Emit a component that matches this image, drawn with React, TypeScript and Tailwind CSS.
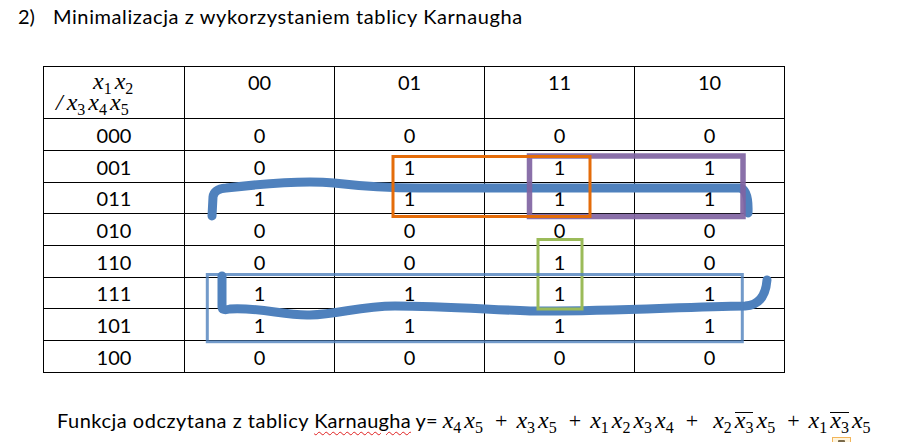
type Row = { label: string; v: string[]; h: string };

const rows: Row[] = [
  { label: "000", v: ["0", "0", "0", "0"], h: "h-[32px]" },
  { label: "001", v: ["0", "1", "1", "1"], h: "h-[32px]" },
  { label: "011", v: ["1", "1", "1", "1"], h: "h-[31px]" },
  { label: "010", v: ["0", "0", "0", "0"], h: "h-[32px]" },
  { label: "110", v: ["0", "0", "1", "0"], h: "h-[32px]" },
  { label: "111", v: ["1", "1", "1", "1"], h: "h-[31px]" },
  { label: "101", v: ["1", "1", "1", "1"], h: "h-[32px]" },
  { label: "100", v: ["0", "0", "0", "0"], h: "h-[32px]" },
];

// one variable with an upright subscript, optional negation bar
function X({ i, bar }: { i: string; bar?: boolean }) {
  return (
    <span className="relative inline-block pr-[3px]">
      <span className="italic text-[24px]">x</span>
      <span className="relative top-[5px] text-[16px] not-italic">{i}</span>
      {bar && <span className="absolute left-0 right-[3px] top-[4px] h-px bg-black" />}
    </span>
  );
}

function Plus() {
  return <span className="mx-[9px] text-[22px] not-italic">+</span>;
}

export default function App() {
  return (
    <div className="relative w-[912px] h-[442px] overflow-hidden bg-white text-black font-['Lato','Open_Sans',sans-serif]">
      <div className="h-[66px] pt-[4px] pl-[18px] text-[20px] leading-[24px]">
        <span>2)</span>
        <span className="ml-[18px] tracking-[0.6px]">Minimalizacja z wykorzystaniem tablicy Karnaugha</span>
      </div>

      <table className="ml-[43px] w-[742px] table-fixed border-collapse text-[20px] leading-[24px]">
        <colgroup>
          <col className="w-[141px]" />
          <col className="w-[150px]" />
          <col className="w-[150px]" />
          <col className="w-[150px]" />
          <col className="w-[150px]" />
        </colgroup>
        <tbody>
          <tr>
            <td className="h-[52px] border border-black p-0 align-top">
              <div className="flex flex-col font-['Liberation_Serif',serif] leading-[19px]">
                <span className="pl-[49px] pt-[5px]">
                  <X i="1" />
                  <X i="2" />
                </span>
                <span className="pl-[12px]">
                  <span className="mr-[4px] text-[24px] italic">/</span>
                  <X i="3" />
                  <X i="4" />
                  <X i="5" />
                </span>
              </div>
            </td>
            {["00", "01", "11", "10"].map((c) => (
              <td key={c} className="border border-black p-0 pt-[3px] text-center align-top">
                {c}
              </td>
            ))}
          </tr>
          {rows.map((r) => (
            <tr key={r.label}>
              <td className={`${r.h} border border-black p-0 text-center align-middle`}>{r.label}</td>
              {r.v.map((v, k) => (
                <td key={k} className="border border-black p-0 text-center align-middle">
                  {v}
                </td>
              ))}
            </tr>
          ))}
        </tbody>
      </table>

      <div className="mt-[35px] pl-[57px] text-[20px] leading-[24px] whitespace-nowrap">
        <span className="tracking-[0.5px]">Funkcja odczytana z tablicy </span>
        <span className="tracking-[0.3px] underline decoration-wavy decoration-[#e02020] decoration-1 underline-offset-[3px]">
          Karnaugha
        </span>
        <span> y= </span>
        <span className="font-['Liberation_Serif',serif]">
          <X i="4" />
          <X i="5" />
          <Plus />
          <X i="3" />
          <X i="5" />
          <Plus />
          <X i="1" />
          <X i="2" />
          <X i="3" />
          <X i="4" />
          <Plus />
          <span className="ml-[6px]" />
          <X i="2" />
          <X i="3" bar />
          <X i="5" />
          <Plus />
          <X i="1" />
          <X i="3" bar />
          <X i="5" />
        </span>
      </div>

      {/* paste options marker, cut off by the bottom edge */}
      <div className="absolute left-[832px] top-[437px] h-[10px] w-[19px] border border-[#f2b55a] bg-[#fff4dc]">
        <div className="mx-auto mt-[2px] h-[6px] w-[7px] rounded-[1px] bg-[#7a6a4a]" />
      </div>

      {/* hand-drawn groupings over the map */}
      <svg className="pointer-events-none absolute inset-0" width="912" height="442" viewBox="0 0 912 442" fill="none">
        <path
          d="M212 216 L213 197 Q214 189 226 188 C260 184 300 180 334 183 C360 186 380 188 420 188 L740 188 Q749 190 748 213"
          stroke="#4f81bd"
          strokeWidth="9"
          strokeLinecap="round"
          strokeLinejoin="round"
        />
        <path
          d="M222 276 L222 307 Q222 311 230 309 C260 307 285 316 310 315 C340 314 360 306 395 306 C440 306 480 309 530 311 C600 312 680 307 745 306 Q765 305 767 280"
          stroke="#4f81bd"
          strokeWidth="9"
          strokeLinecap="round"
          strokeLinejoin="round"
        />
        <rect x="529.5" y="156" width="213.5" height="60.5" stroke="#8064a2" strokeOpacity="0.92" strokeWidth="5.5" />
        <rect x="393" y="156.5" width="197" height="60" stroke="#e46c0a" strokeWidth="3" />
        <rect x="538" y="239.5" width="44" height="69.5" stroke="#9bbb59" strokeWidth="3" />
        <rect x="207.3" y="274.5" width="535" height="67.2" stroke="#4f81bd" strokeOpacity="0.8" strokeWidth="3" />
      </svg>
    </div>
  );
}
